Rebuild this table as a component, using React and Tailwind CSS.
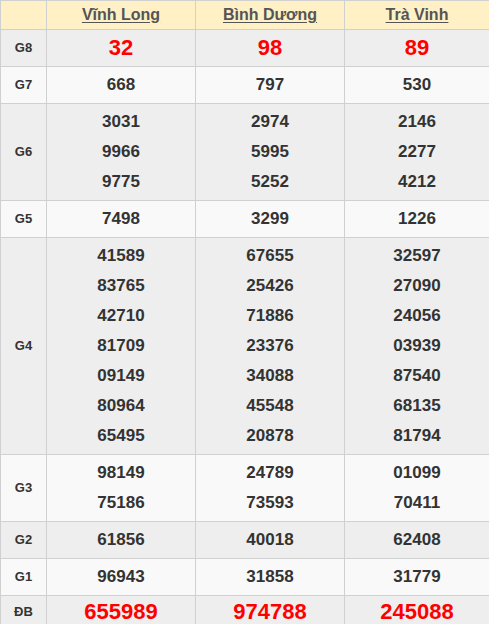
import React from "react";

const rows = [
  { label: "G8", vals: [["32"], ["98"], ["89"]], red: true, big: "text-[22px] leading-[30px]" },
  { label: "G7", vals: [["668"], ["797"], ["530"]] },
  { label: "G6", vals: [["3031", "9966", "9775"], ["2974", "5995", "5252"], ["2146", "2277", "4212"]] },
  { label: "G5", vals: [["7498"], ["3299"], ["1226"]] },
  {
    label: "G4",
    vals: [
      ["41589", "83765", "42710", "81709", "09149", "80964", "65495"],
      ["67655", "25426", "71886", "23376", "34088", "45548", "20878"],
      ["32597", "27090", "24056", "03939", "87540", "68135", "81794"],
    ],
  },
  { label: "G3", vals: [["98149", "75186"], ["24789", "73593"], ["01099", "70411"]] },
  { label: "G2", vals: [["61856"], ["40018"], ["62408"]] },
  { label: "G1", vals: [["96943"], ["31858"], ["31779"]] },
  { label: "ĐB", vals: [["655989"], ["974788"], ["245088"]], red: true, big: "text-[22px] leading-[24px]", last: true },
];

const bgs = ["bg-[#eeeeee]", "bg-[#f9f9f9]"];

export default function App() {
  return (
    <div className="w-[489px] h-[624px] overflow-hidden bg-white" style={{ fontFamily: '"Liberation Sans", Arial, sans-serif' }}>
      <table className="border-collapse w-[489px] table-fixed">
        <colgroup>
          <col className="w-[46px]" />
          <col className="w-[149px]" />
          <col className="w-[149px]" />
          <col className="w-[145px]" />
        </colgroup>
        <thead>
          <tr className="bg-[#fff1c5] h-[29px]">
            <th className="border border-[#d0d0d0]"></th>
            {["Vĩnh Long", "Bình Dương", "Trà Vinh"].map((n) => (
              <th key={n} className="border border-[#d0d0d0] text-[16px] font-bold text-[#555555] underline underline-offset-2 leading-[20px] p-0">
                {n}
              </th>
            ))}
          </tr>
        </thead>
        <tbody>
          {rows.map((r, i) => (
            <tr key={r.label} className={bgs[i % 2]}>
              <td className={r.last ? "border border-[#d0d0d0] text-center text-[13px] font-bold text-[#333333] p-0 pt-[3px]" : "border border-[#d0d0d0] text-center text-[13px] font-bold text-[#333333] p-0"}>{r.label}</td>
              {r.vals.map((col, j) => (
                <td key={j} className={r.last ? "border border-[#d0d0d0] text-center pt-[4px] pb-0 px-0" : "border border-[#d0d0d0] text-center py-[3px] px-0"}>
                  {col.map((v, k) => (
                    <div
                      key={k}
                      className={
                        r.red
                          ? `font-bold text-[#ff0000] ${r.big}`
                          : "font-bold text-[#333333] text-[17px] leading-[30px]"
                      }
                    >
                      {v}
                    </div>
                  ))}
                </td>
              ))}
            </tr>
          ))}
        </tbody>
      </table>
    </div>
  );
}
